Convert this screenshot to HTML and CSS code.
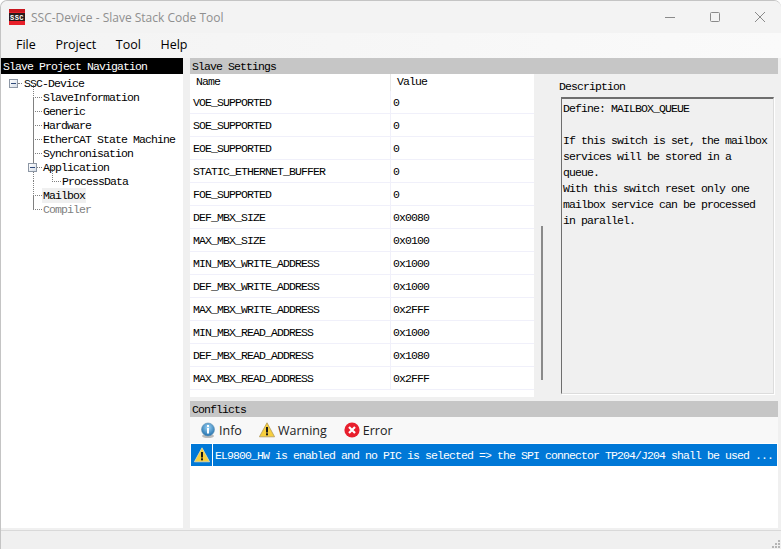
FILE: index.html
```html
<!DOCTYPE html>
<html lang="en">
<head>
  <meta charset="UTF-8">
  <meta name="viewport" content="width=device-width, initial-scale=1.0">
  <title>SSC-Device - Slave Stack Code Tool</title>
  <link rel="stylesheet" href="styles.css">
</head>
<body>
  <div class="window">
    <div class="titlebar">
      <svg class="titlebar__icon" width="16" height="16" viewBox="0 0 16 16">
        <rect width="16" height="16" fill="#e8202a"/>
        <rect width="16" height="3" fill="#c8161e"/>
        <rect y="4" width="16" height="8" fill="#2a1a1a"/>
        <text class="titlebar__logo" x="8" y="10.6" text-anchor="middle">SSC</text>
      </svg>
      <span class="titlebar__text">SSC-Device - Slave Stack Code Tool</span>
      <div class="titlebar__btns">
        <svg width="10" height="10" viewBox="0 0 10 10"><path d="M0 5.5h10" stroke="#8a8a8a"/></svg>
        <svg width="10" height="10" viewBox="0 0 10 10"><rect x=".5" y=".5" width="9" height="9" rx="1" fill="none" stroke="#8a8a8a"/></svg>
        <svg width="10" height="10" viewBox="0 0 10 10"><path d="M0 0l10 10M10 0L0 10" stroke="#8a8a8a" fill="none"/></svg>
      </div>
    </div>
    <div class="menu">
      <span class="menu__item">File</span>
      <span class="menu__item">Project</span>
      <span class="menu__item">Tool</span>
      <span class="menu__item">Help</span>
    </div>
    <div class="main">
      <div class="nav">
        <div class="nav__head">Slave Project Navigation</div>
        <div class="tree">
          <div class="tree__row tree__row--root"><i class="expander"></i>SSC-Device</div>
          <div class="tree__row tree__row--child">SlaveInformation</div>
          <div class="tree__row tree__row--child">Generic</div>
          <div class="tree__row tree__row--child">Hardware</div>
          <div class="tree__row tree__row--child">EtherCAT State Machine</div>
          <div class="tree__row tree__row--child">Synchronisation</div>
          <div class="tree__row tree__row--child"><i class="expander"></i>Application</div>
          <div class="tree__row tree__row--leaf">ProcessData</div>
          <div class="tree__row tree__row--child"><span class="tree__sel">Mailbox</span></div>
          <div class="tree__row tree__row--child tree__row--last tree__row--off">Compiler</div>
        </div>
      </div>
      <div class="content">
        <div class="section-head">Slave Settings</div>
        <div class="settings">
          <div class="table">
            <div class="table__head">
              <span class="table__name">Name</span>
              <span class="table__value">Value</span>
            </div>
            <div class="row"><span class="row__name">VOE_SUPPORTED</span><span class="row__value">0</span></div>
            <div class="row"><span class="row__name">SOE_SUPPORTED</span><span class="row__value">0</span></div>
            <div class="row"><span class="row__name">EOE_SUPPORTED</span><span class="row__value">0</span></div>
            <div class="row"><span class="row__name">STATIC_ETHERNET_BUFFER</span><span class="row__value">0</span></div>
            <div class="row"><span class="row__name">FOE_SUPPORTED</span><span class="row__value">0</span></div>
            <div class="row"><span class="row__name">DEF_MBX_SIZE</span><span class="row__value">0x0080</span></div>
            <div class="row"><span class="row__name">MAX_MBX_SIZE</span><span class="row__value">0x0100</span></div>
            <div class="row"><span class="row__name">MIN_MBX_WRITE_ADDRESS</span><span class="row__value">0x1000</span></div>
            <div class="row"><span class="row__name">DEF_MBX_WRITE_ADDRESS</span><span class="row__value">0x1000</span></div>
            <div class="row"><span class="row__name">MAX_MBX_WRITE_ADDRESS</span><span class="row__value">0x2FFF</span></div>
            <div class="row"><span class="row__name">MIN_MBX_READ_ADDRESS</span><span class="row__value">0x1000</span></div>
            <div class="row"><span class="row__name">DEF_MBX_READ_ADDRESS</span><span class="row__value">0x1080</span></div>
            <div class="row"><span class="row__name">MAX_MBX_READ_ADDRESS</span><span class="row__value">0x2FFF</span></div>
          </div>
          <div class="scroller"><div class="scroller__thumb"></div></div>
          <div class="desc">
            <div class="desc__label">Description</div>
            <div class="desc__box">Define: MAILBOX_QUEUE<br><br>If this switch is set, the mailbox<br>services will be stored in a<br>queue.<br>With this switch reset only one<br>mailbox service can be processed<br>in parallel.</div>
          </div>
        </div>
        <div class="section-head section-head--conflicts">Conflicts</div>
        <div class="toolbar">
          <span class="tool tool--info">
            <svg width="16" height="16" viewBox="0 0 16 16">
              <defs><radialGradient id="ball" cx=".5" cy=".35" r=".7"><stop offset="0" stop-color="#9fd4f5"/><stop offset="1" stop-color="#1668a8"/></radialGradient></defs>
              <ellipse cx="8" cy="14" rx="6" ry="2" fill="#bbb"/>
              <circle cx="8" cy="7.5" r="6.5" fill="url(#ball)" stroke="#5e8fb0" stroke-width=".6"/>
              <rect x="7" y="3" width="2" height="2" fill="#fff"/>
              <rect x="7" y="6" width="2" height="5.5" fill="#fff"/>
            </svg>Info</span>
          <span class="tool tool--warn">
            <svg width="16" height="16" viewBox="0 0 16 16">
              <path d="M8 .8L15.6 14.8H.4z" fill="#f7cf3d" stroke="#b39a5c" stroke-width=".8"/>
              <rect x="7" y="5" width="2" height="5.5" fill="#1a1a1a"/>
              <rect x="7" y="11.3" width="2" height="2" fill="#1a1a1a"/>
            </svg>Warning</span>
          <span class="tool tool--error">
            <svg width="16" height="16" viewBox="0 0 16 16">
              <circle cx="8" cy="8" r="7.6" fill="#e81f2d"/>
              <path d="M5 5l6 6M11 5l-6 6" stroke="#fff" stroke-width="2.2"/>
            </svg>Error</span>
        </div>
        <div class="conflicts">
          <div class="conflict">
            <span class="conflict__icon">
              <svg width="16" height="16" viewBox="0 0 16 16">
                <path d="M8 .8L15.6 14.8H.4z" fill="#f7cf3d" stroke="#e8dcb0" stroke-width=".8"/>
                <rect x="7" y="5" width="2" height="5.5" fill="#1a1a1a"/>
                <rect x="7" y="11.3" width="2" height="2" fill="#1a1a1a"/>
              </svg>
            </span>
            <span class="conflict__text">EL9800_HW is enabled and no PIC is selected =&gt; the SPI connector TP204/J204 shall be used ...</span>
          </div>
        </div>
      </div>
    </div>
    <div class="status">
      <svg width="10" height="10" viewBox="0 0 10 10" fill="#b5b5b5">
        <rect x="7" y="1" width="2" height="2"/><rect x="4" y="4" width="2" height="2"/><rect x="7" y="4" width="2" height="2"/>
        <rect x="1" y="7" width="2" height="2"/><rect x="4" y="7" width="2" height="2"/><rect x="7" y="7" width="2" height="2"/>
      </svg>
    </div>
  </div>
</body>
</html>
```

FILE: styles.css
```css
html, body{
  margin: 0;
  height: 100%;
  overflow: hidden;
  background: #fff;
}

.window{
  height: 549px;
  box-sizing: border-box;
  display: flex;
  flex-direction: column;
  background: #f0f0f0;
  border-top: 1px solid #c4c4c4;
  border-left: 1px solid #c4c4c4;
  border-top-left-radius: 7px;
  border-top-right-radius: 7px;
  font-family: "Liberation Mono", monospace;
  font-size: 11.5px;
  letter-spacing: -0.9px;
  color: #000;
}

.titlebar{
  height: 32px;
  flex: none;
  display: flex;
  align-items: center;
  padding-left: 8px;
  background: #f3f3f3;
  border-top-left-radius: 7px;
  border-top-right-radius: 7px;
  font-family: "Open Sans", sans-serif;
  letter-spacing: 0;
}
.titlebar__logo{
  font-family: "Liberation Mono", monospace;
  font-size: 7px;
  font-weight: bold;
  letter-spacing: 0.5px;
  fill: #fff;
}
.titlebar__text{
  margin-left: 6px;
  font-size: 12px;
  color: #8f8f8f;
}
.titlebar__btns{
  margin-left: auto;
  display: flex;
  gap: 35px;
  padding-right: 16px;
}

.menu{
  height: 25px;
  flex: none;
  display: flex;
  align-items: center;
  padding: 0 0 2px 15px;
  box-sizing: border-box;
  gap: 19.6px;
  background: linear-gradient(90deg, #f3f3f3, #fafafa);
  font-family: "Open Sans", sans-serif;
  font-size: 12.5px;
  letter-spacing: 0;
}

.main{
  flex: 1;
  min-height: 0;
  display: flex;
  padding-right: 3px;
}

.nav{
  width: 182px;
  flex: none;
  display: flex;
  flex-direction: column;
}
.nav__head{
  height: 16px;
  line-height: 17px;
  padding-left: 2px;
  background: #000;
  color: #fff;
}
.tree{
  flex: 1;
  background: #fff;
  padding-top: 2px;
}
.tree__row{
  position: relative;
  height: 14px;
  line-height: 15px;
  white-space: nowrap;
}
.tree__row--root{ padding-left: 23px; }
.tree__row--child{ padding-left: 42px; }
.tree__row--leaf{ padding-left: 61px; }
.tree__row--off{ color: #808080; }
.tree__sel{
  display: inline-block;
  background: #f0f0f0;
  padding: 0 1px;
  margin-left: -1px;
}

/* dotted tree connectors */
.tree__row--child::before,
.tree__row--leaf::before{
  content: "";
  position: absolute;
  top: -7px;
  height: 14px;
  border-left: 1px dotted #808080;
  border-bottom: 1px dotted #808080;
}
.tree__row--child::before{
  left: 32px;
  width: 8px;
}
.tree__row--leaf::before{
  left: 51px;
  width: 8px;
}
.tree__row--child::after{
  content: "";
  position: absolute;
  left: 32px;
  top: 7px;
  height: 14px;
  border-left: 1px dotted #808080;
}
.tree__row--last::after{ display: none; }
.tree__row--root::before{
  content: "";
  position: absolute;
  left: 17px;
  top: 7px;
  width: 4px;
  border-bottom: 1px dotted #808080;
}

.expander{
  position: absolute;
  z-index: 1;
  top: 3px;
  width: 7px;
  height: 7px;
  border: 1px solid #8d97a5;
  background: linear-gradient(135deg, #fff, #d6dde6) ;
}
.expander::after{
  content: "";
  position: absolute;
  left: 1px;
  top: 3px;
  width: 5px;
  height: 1px;
  background: #2f4a7a;
}
.tree__row--root .expander{ left: 8px; }
.tree__row--child .expander{ left: 27px; }

.content{
  margin-left: 7px;
  flex: 1;
  min-width: 0;
  display: flex;
  flex-direction: column;
}

.section-head{
  height: 16px;
  flex: none;
  line-height: 17px;
  padding-left: 2px;
  background: #c6c6c6;
}
.section-head--conflicts{ margin-top: 4px; }

.settings{
  height: 323px;
  flex: none;
  display: flex;
}

.table{
  width: 344px;
  flex: none;
  background: #fff;
}
.table__head{
  height: 17px;
  line-height: 16px;
  display: flex;
}
.table__name{
  width: 194px;
  padding-left: 6px;
  border-right: 1px solid #e8e8e8;
}
.table__value{
  padding-left: 6px;
}
.row{
  height: 23px;
  box-sizing: border-box;
  line-height: 23px;
  display: flex;
  border-bottom: 1px solid #f0f0fa;
}
.row__name{
  width: 197px;
  padding-left: 3px;
  border-right: 1px solid #f0f0fa;
}
.row__value{
  padding-left: 2px;
}

.scroller{
  width: 16px;
  flex: none;
  display: flex;
  flex-direction: column;
  align-items: center;
  padding-top: 152px;
  padding-bottom: 17px;
}
.scroller__thumb{
  flex: 1;
  width: 2px;
  background: #8a8a8a;
}

.desc{
  flex: 1;
  padding: 5px 4px 3px 11px;
  display: flex;
  flex-direction: column;
}
.desc__label{
  height: 18px;
  line-height: 15px;
  margin-left: -2px;
}
.desc__box{
  flex: 1;
  padding: 2px 0 0 1px;
  line-height: 16px;
  border-style: solid;
  border-width: 2px 1px 1px 1px;
  border-color: #6e6e6e #dcdcdc #dcdcdc #6e6e6e;
  box-shadow: 1px 1px 0 #fff;
  white-space: nowrap;
}

.toolbar{
  height: 26px;
  flex: none;
  display: flex;
  align-items: center;
  padding-left: 10px;
  gap: 17px;
  background: #f8f8f8;
  font-family: "Open Sans", sans-serif;
  font-size: 12.5px;
  letter-spacing: 0;
  color: #222;
}
.tool{
  display: flex;
  align-items: center;
  gap: 3px;
}

.conflicts{
  flex: 1;
  background: #fff;
  padding-top: 1px;
}
.conflict{
  height: 22px;
  display: flex;
  margin-left: 1px;
  margin-right: 1px;
  background: #0078d7;
  color: #fff;
  line-height: 23px;
}
.conflict__icon{
  width: 21px;
  flex: none;
  display: flex;
  align-items: center;
  justify-content: center;
  border-right: 1px solid #fff;
}
.conflict__text{
  padding-left: 2px;
  white-space: nowrap;
}

.status{
  height: 18px;
  flex: none;
  display: flex;
  justify-content: flex-end;
  align-items: flex-end;
  margin-top: 2px;
  border-top: 1px solid #d9d9d9;
  background: #f0f0f0;
}
```
